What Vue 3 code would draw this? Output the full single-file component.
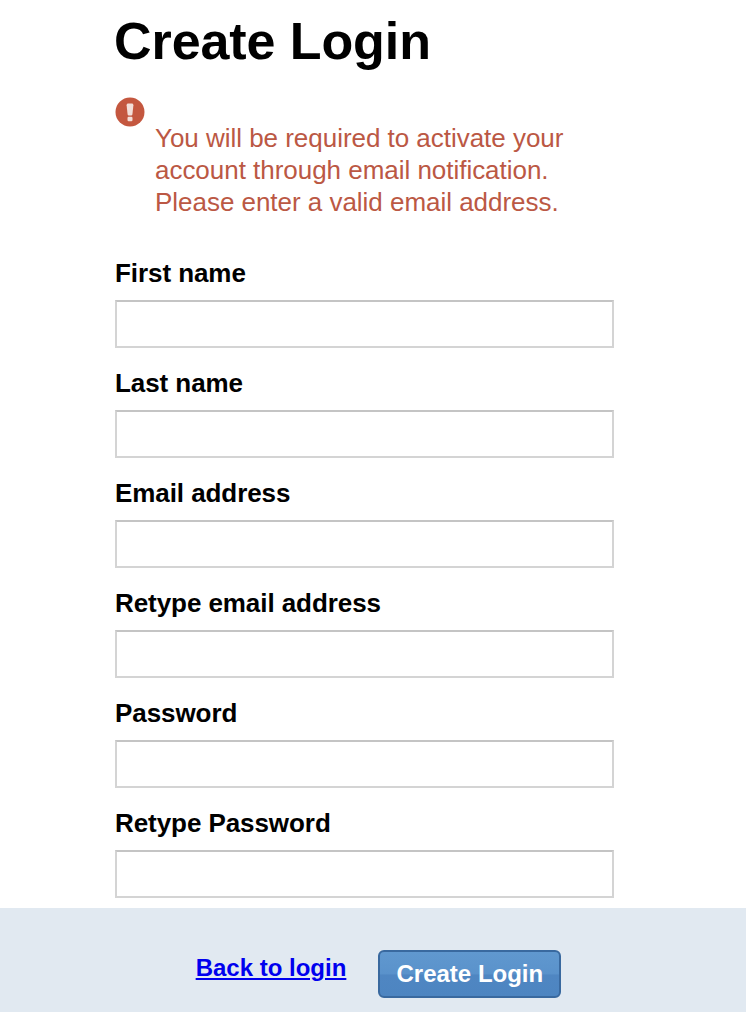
<script setup>
const fields = ['First name', 'Last name', 'Email address', 'Retype email address', 'Password', 'Retype Password']
</script>

<template>
  <div class="page">
    <main class="content">
      <h1 class="title">Create Login</h1>
      <div class="notice">
        <svg class="notice-icon" viewBox="0 0 30 30" width="30" height="30" aria-hidden="true">
          <circle cx="15" cy="15" r="14.5" fill="#c4573f" />
          <path d="M11.6 8.2c0-1 .7-1.7 1.7-1.7h3.4c1 0 1.7.7 1.7 1.7l-1 9.2c-.1.7-.5 1.1-1.2 1.1h-2.4c-.7 0-1.1-.4-1.2-1.1z" fill="#f3dfd9" />
          <rect x="12.5" y="19.8" width="5" height="4.4" rx="1.2" fill="#f3dfd9" />
        </svg>
        <p class="notice-text">You will be required to activate your account through email notification. Please enter a valid email address.</p>
      </div>
      <form class="form">
        <label v-for="f in fields" :key="f" class="field">
          <span class="field-label">{{ f }}</span>
          <input class="field-input" type="text" />
        </label>
      </form>
    </main>
    <footer class="footer">
      <a class="back" href="#">Back to login</a>
      <button class="submit" type="button">Create Login</button>
    </footer>
  </div>
</template>

<style scoped>
.page {
  width: 746px;
  height: 1012px;
  display: flex;
  flex-direction: column;
  font-family: "Liberation Sans", Arial, sans-serif;
  background: #fff;
  overflow: hidden;
}
.content {
  flex: 1;
  padding: 0 132px 0 115px;
}
.title {
  margin: 12px 0 0 -1px;
  font-size: 52px;
  line-height: 58px;
  font-weight: 700;
  letter-spacing: -0.08px;
  color: #000;
}
.notice {
  margin-top: 27px;
  height: 120px;
}
.notice-icon {
  display: block;
}
.notice-text {
  margin: -5px 0 0 40px;
  width: 440px;
  font-size: 26px;
  line-height: 32px;
  letter-spacing: -0.03px;
  color: #bb5844;
}
.form {
  margin-top: 38px;
  display: flex;
  flex-direction: column;
  gap: 17px;
}
.field {
  display: flex;
  flex-direction: column;
  gap: 11px;
}
.field-label {
  font-size: 26px;
  line-height: 32px;
  padding-top: 2px;
  font-weight: 700;
  letter-spacing: -0.07px;
  color: #000;
}
.field-input {
  box-sizing: border-box;
  width: 499px;
  height: 48px;
  border: 2px solid #d4d4d4;
  border-top-color: #c4c4c4;
  background: #fff;
  padding: 0 8px;
  margin: 0;
  outline: none;
}
.footer {
  height: 104px;
  background: #e1e9f1;
  display: flex;
  align-items: flex-start;
  justify-content: center;
  gap: 32px;
  padding: 42px 0 0 11px;
  box-sizing: border-box;
}
.back {
  font-size: 24px;
  font-weight: 700;
  line-height: 36px;
  color: #0000ee;
  text-decoration: underline;
}
.submit {
  width: 183px;
  height: 48px;
  border: 2px solid #39699f;
  border-radius: 6px;
  background: linear-gradient(#6098cf, #5a92cb 50%, #4f86c2 52%, #4d85c1);
  color: #fff;
  font-family: inherit;
  font-size: 24px;
  font-weight: 700;
  padding: 0;
}
</style>
